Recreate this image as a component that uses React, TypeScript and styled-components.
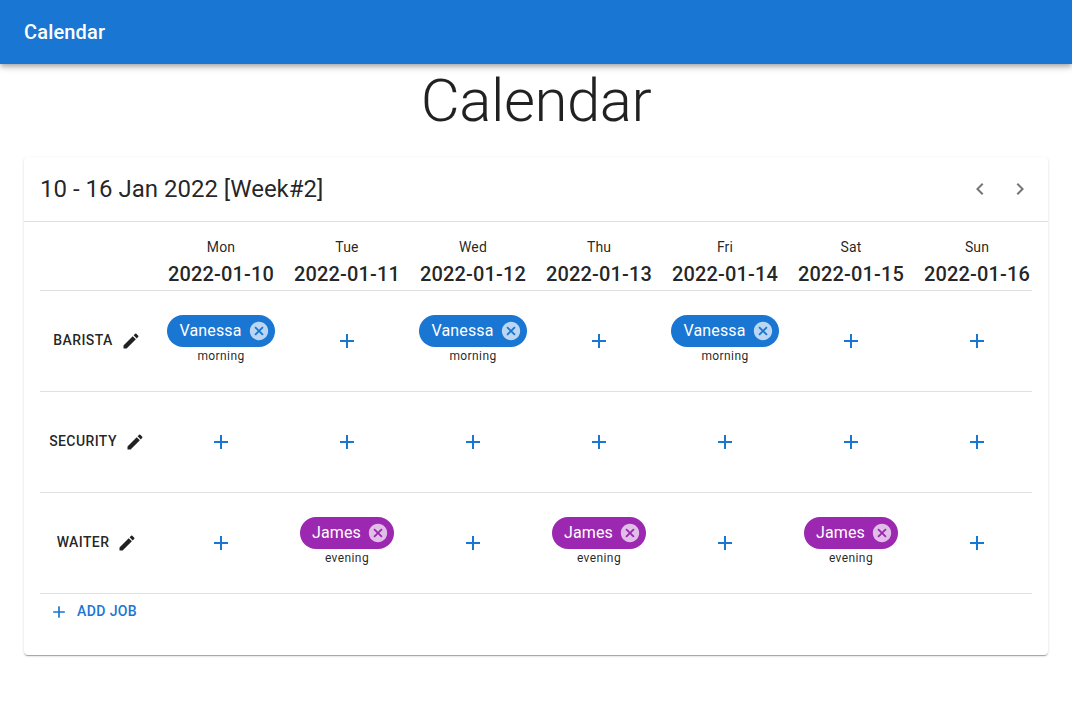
import React from "react";
import styled, { createGlobalStyle } from "styled-components";

const Global = createGlobalStyle`
  *, *::before, *::after { box-sizing: border-box; }
  body { margin: 0; background: #fff; color: rgba(0,0,0,0.87); font-family: Roboto, sans-serif; -webkit-font-smoothing: antialiased; }
`;

const Page = styled.div`
  min-height: 100vh;
`;
const AppBar = styled.header`
  position: relative;
  display: flex;
  align-items: center;
  height: 64px;
  padding: 0 24px;
  background: #1976d2;
  color: #fff;
  box-shadow: 0 2px 4px -1px rgba(0,0,0,0.2), 0 4px 5px 0 rgba(0,0,0,0.14), 0 1px 10px 0 rgba(0,0,0,0.12);
`;
const Brand = styled.div`
  font-size: 20px;
  font-weight: 500;
  line-height: 32px;
  letter-spacing: 0.15px;
`;
const Title = styled.h1`
  margin: 0;
  height: 72px;
  text-align: center;
  font-size: 60px;
  font-weight: 300;
  line-height: 74px;
  letter-spacing: -0.5px;
`;
const Card = styled.section`
  margin: 21px 24px 0;
  height: 498.4px;
  background: #fff;
  border-radius: 4px;
  box-shadow: 0 2px 1px -1px rgba(0,0,0,0.2), 0 1px 1px 0 rgba(0,0,0,0.14), 0 1px 3px 0 rgba(0,0,0,0.12);
`;
const CardHeader = styled.div`
  display: flex;
  align-items: center;
  justify-content: space-between;
  height: 65px;
  padding: 0 8px 0 16px;
  border-bottom: 1px solid rgba(0,0,0,0.12);
`;
const Range = styled.h2`
  margin: 0;
  font-size: 24px;
  font-weight: 400;
  line-height: 32px;
`;
const Nav = styled.div`
  display: flex;
`;
const IconButton = styled.button`
  display: flex;
  align-items: center;
  justify-content: center;
  width: 40px;
  height: 40px;
  padding: 0;
  border: 0;
  border-radius: 50%;
  background: transparent;
  color: ${(p) => p.color};
`;
const Icon = styled.svg<{ $size: number }>`
  display: block;
  flex: none;
  width: ${(p) => p.$size}px;
  height: ${(p) => p.$size}px;
  fill: currentColor;
`;
const Body = styled.div`
  padding: 15px 16px 0;
`;
const Row = styled.div<{ $height: number }>`
  display: grid;
  grid-template-columns: 118px repeat(7, 126px);
  height: ${(p) => p.$height}px;
  margin-right: -8px;
  border-bottom: 1px solid rgba(0,0,0,0.12);
`;
const Grid = styled.div`
  overflow: hidden;
`;
const Day = styled.div`
  text-align: center;
`;
const Weekday = styled.div`
  font-size: 14px;
  line-height: 20px;
  letter-spacing: 0.15px;
`;
const DateText = styled.div`
  font-size: 20px;
  font-weight: 500;
  line-height: 34px;
  letter-spacing: 0.15px;
`;
const Job = styled.div`
  display: flex;
  align-items: center;
  justify-content: center;
  padding-right: 4px;
  font-size: 14px;
  font-weight: 500;
  letter-spacing: 0.4px;
  text-transform: uppercase;
  gap: 8px;
`;
const JobName = styled.span`
  padding-bottom: 2px;
`;
const Cell = styled.div`
  display: flex;
  flex-direction: column;
  align-items: center;
  justify-content: center;
`;
const Assignment = styled.div`
  display: flex;
  flex-direction: column;
  align-items: center;
  padding-bottom: 2px;
`;
const Chip = styled.div<{ $color: string }>`
  display: flex;
  align-items: center;
  height: 32px;
  padding: 0 5px 0 12px;
  gap: 6px;
  border-radius: 16px;
  background: ${(p) => p.$color};
  color: #fff;
  font-size: 16px;
  line-height: 24px;
  letter-spacing: 0.15px;
  svg { color: rgba(255,255,255,0.7); }
`;
const Shift = styled.div`
  font-size: 12px;
  line-height: 19px;
  letter-spacing: 0.4px;
`;
const AddJob = styled.button`
  display: flex;
  align-items: center;
  gap: 8px;
  height: 36px;
  padding: 0 9px;
  border: 0;
  background: transparent;
  color: #1976d2;
  font: 500 14px/24px Roboto, sans-serif;
  letter-spacing: 0.4px;
  text-transform: uppercase;
`;

const paths = {
  left: "M15.41 7.41 14 6l-6 6 6 6 1.41-1.41L10.83 12z",
  right: "M10 6 8.59 7.41 13.17 12l-4.58 4.59L10 18l6-6z",
  add: "M19 13h-6v6h-2v-6H5v-2h6V5h2v6h6v2z",
  edit: "M3 17.25V21h3.75L17.81 9.94l-3.75-3.75L3 17.25zM20.71 7.04c.39-.39.39-1.02 0-1.41l-2.34-2.34a.9959.9959 0 0 0-1.41 0l-1.83 1.83 3.75 3.75 1.83-1.83z",
  cancel: "M12 2C6.47 2 2 6.47 2 12s4.47 10 10 10 10-4.47 10-10S17.53 2 12 2zm5 13.59L15.59 17 12 13.41 8.41 17 7 15.59 10.59 12 7 8.41 8.41 7 12 10.59 15.59 7 17 8.41 13.41 12 17 15.59z",
};
function Glyph({ name, size }: { name: keyof typeof paths; size: number }) {
  return <Icon $size={size} viewBox="0 0 24 24" aria-hidden="true"><path d={paths[name]} /></Icon>;
}

const weekdays = ["Mon", "Tue", "Wed", "Thu", "Fri", "Sat", "Sun"];
const jobs = [
  { name: "Barista", person: "Vanessa", shift: "morning", color: "#1976d2", days: [0, 2, 4] },
  { name: "Security", person: "", shift: "", color: "", days: [] as number[] },
  { name: "Waiter", person: "James", shift: "evening", color: "#9c27b0", days: [1, 3, 5] },
];

export default function App() {
  return (
    <Page>
      <Global />
      <AppBar><Brand>Calendar</Brand></AppBar>
      <Title>Calendar</Title>
      <Card>
        <CardHeader>
          <Range>10 - 16 Jan 2022 [Week#2]</Range>
          <Nav>
            <IconButton color="rgba(0,0,0,0.54)" aria-label="Previous week"><Glyph name="left" size={24} /></IconButton>
            <IconButton color="rgba(0,0,0,0.54)" aria-label="Next week"><Glyph name="right" size={24} /></IconButton>
          </Nav>
        </CardHeader>
        <Body>
          <Grid>
            <Row $height={54}>
              <div />
              {weekdays.map((d, i) => (
                <Day key={d}><Weekday>{d}</Weekday><DateText>2022-01-{10 + i}</DateText></Day>
              ))}
            </Row>
            {jobs.map((job) => (
              <Row key={job.name} $height={101}>
                <Job><JobName>{job.name}</JobName><Glyph name="edit" size={20} /></Job>
                {weekdays.map((d, i) => (
                  <Cell key={d}>
                    {job.days.includes(i) ? (
                      <Assignment>
                        <Chip $color={job.color}><span>{job.person}</span><Glyph name="cancel" size={22} /></Chip>
                        <Shift>{job.shift}</Shift>
                      </Assignment>
                    ) : (
                      <IconButton color="#1976d2" aria-label="Add shift"><Glyph name="add" size={24} /></IconButton>
                    )}
                  </Cell>
                ))}
              </Row>
            ))}
          </Grid>
          <AddJob><Glyph name="add" size={20} /><JobName>Add job</JobName></AddJob>
        </Body>
      </Card>
    </Page>
  );
}
